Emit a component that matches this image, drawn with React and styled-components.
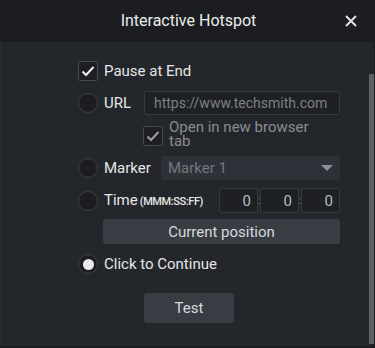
import React from 'react';
import styled, { createGlobalStyle } from 'styled-components';

const Global = createGlobalStyle`
  html, body { margin: 0; padding: 0; background: #23262b; }
  body { font-family: Roboto, "Liberation Sans", sans-serif; }
`;

const Dialog = styled.div`
  width: 375px;
  height: 348px;
  box-sizing: border-box;
  background: #23262b;
  border-right: 1px solid #1a1c1f;
  border-bottom: 2px solid #1a1c1f;
  display: flex;
  flex-direction: column;
  overflow: hidden;
`;

const Header = styled.div`
  height: 42px;
  flex: none;
  background: #1b1d20;
  display: flex;
  align-items: center;
  justify-content: center;
  position: relative;
  color: #ececec;
  font-size: 16px;
  padding: 0 0 2px 3px;
  box-sizing: border-box;
`;

const Close = styled.button`
  position: absolute;
  right: 17px;
  top: 15px;
  width: 12px;
  height: 12px;
  padding: 0;
  border: 0;
  background: none;
  display: flex;
`;

const Body = styled.div`
  flex: 1;
  display: flex;
  border-left: 1px solid #2a2d33;
`;

const Content = styled.div`
  flex: 1;
  padding: 19px 0 0 77px;
  display: flex;
  flex-direction: column;
`;

const Track = styled.div`
  width: 5px;
  padding-top: 32px;
  display: flex;
`;

const Thumb = styled.div`
  width: 5px;
  height: 270px;
  background: #5c5f64;
`;

const Row = styled.div`
  display: flex;
  align-items: ${(p) => p.$align || 'center'};
  width: 262px;
  margin-top: ${(p) => p.$top || 0}px;
  padding-left: ${(p) => p.$indent || 0}px;
  box-sizing: border-box;
`;

const Label = styled.span`
  color: #e6e6e6;
  font-size: 15px;
  margin-left: 6px;
  line-height: 20px;
  white-space: nowrap;
`;

const Note = styled.span`
  color: #8b8d91;
  font-size: 15px;
  margin: -6px 0 -2px 6px;
  line-height: 14px;
  width: 150px;
`;

const Small = styled.span`
  font-size: 11px;
  font-weight: 500;
  letter-spacing: -0.4px;
  margin-left: 2px;
`;

const Box = styled.span`
  flex: none;
  width: 18px;
  height: 18px;
  border: 1px solid #46494e;
  border-radius: 2px;
  background: #1d1f23;
  display: flex;
  align-items: center;
  justify-content: center;
`;

const Radio = styled.span`
  flex: none;
  width: 18px;
  height: 18px;
  border: 1px solid #3c3f45;
  border-radius: 50%;
  background: #1b1d21;
  display: flex;
  align-items: center;
  justify-content: center;
  &::after {
    content: '';
    display: ${(p) => (p.$on ? 'block' : 'none')};
    width: 11px;
    height: 11px;
    border-radius: 50%;
    background: #e8e9ef;
  }
`;

const Field = styled.div`
  margin-left: auto;
  width: ${(p) => p.$w}px;
  height: 24px;
  box-sizing: border-box;
  border: 1px solid #36393e;
  border-radius: 2px;
  background: #1e2024;
  color: #7d8085;
  font-size: 14px;
  padding-left: 9px;
  display: flex;
  align-items: center;
`;

const Select = styled.div`
  margin-left: auto;
  width: 179px;
  height: 24px;
  box-sizing: border-box;
  border-radius: 2px;
  background: #2e3137;
  color: #74777c;
  font-size: 15px;
  padding: 0 7px;
  display: flex;
  align-items: center;
  justify-content: space-between;
`;

const Arrow = styled.span`
  width: 0;
  height: 0;
  border-left: 6px solid transparent;
  border-right: 6px solid transparent;
  border-top: 6px solid #8d9095;
`;

const TimeGroup = styled.div`
  margin-left: auto;
  display: flex;
  align-items: center;
`;

const TimeBox = styled.div`
  width: 39px;
  height: 25px;
  box-sizing: border-box;
  border: 1px solid #36393e;
  border-radius: 2px;
  background: #1e2024;
  color: #b8bcc4;
  font-size: 15px;
  padding-right: 6px;
  display: flex;
  align-items: center;
  justify-content: flex-end;
`;

const Colon = styled.span`
  width: 2px;
  color: #6f86b0;
  font-size: 10px;
  line-height: 10px;
  text-align: center;
`;

const Button = styled.button`
  height: ${(p) => p.$h}px;
  width: ${(p) => p.$w}px;
  margin-left: ${(p) => p.$left}px;
  margin-top: ${(p) => p.$top}px;
  border: 0;
  border-radius: 3px;
  background: #383d43;
  color: #d8d9db;
  font-family: inherit;
  font-size: 15px;
  padding: 0;
`;

const Check = ({ dim }) => (
  <svg width="14" height="12" viewBox="0 0 14 12">
    <path d="M1.5 6.5 L5 10 L12.5 2" fill="none" stroke={dim ? '#9a9ca0' : '#f2f2f2'} strokeWidth="2" />
  </svg>
);

export default function App() {
  return (
    <>
      <Global />
      <Dialog>
        <Header>
          Interactive Hotspot
          <Close>
            <svg width="12" height="12" viewBox="0 0 12 12">
              <path d="M1 1 L11 11 M11 1 L1 11" stroke="#e2e2e2" strokeWidth="2" />
            </svg>
          </Close>
        </Header>
        <Body>
          <Content>
            <Row>
              <Box><Check /></Box>
              <Label>Pause at End</Label>
            </Row>
            <Row $top={10}>
              <Radio />
              <Label>URL</Label>
              <Field $w={196}>https://www.techsmith.com</Field>
            </Row>
            <Row $top={11} $indent={65} $align="flex-start">
              <Box><Check dim /></Box>
              <Note>Open in new browser tab</Note>
            </Row>
            <Row $top={10}>
              <Radio />
              <Label>Marker</Label>
              <Select>
                Marker 1
                <Arrow />
              </Select>
            </Row>
            <Row $top={8}>
              <Radio />
              <Label>Time<Small>(MMM:SS:FF)</Small></Label>
              <TimeGroup>
                <TimeBox>0</TimeBox>
                <Colon>:</Colon>
                <TimeBox>0</TimeBox>
                <Colon>:</Colon>
                <TimeBox>0</TimeBox>
              </TimeGroup>
            </Row>
            <Button $w={237} $h={25} $left={25} $top={6}>Current position</Button>
            <Row $top={10}>
              <Radio $on />
              <Label>Click to Continue</Label>
            </Row>
            <Button $w={90} $h={30} $left={66} $top={19}>Test</Button>
          </Content>
          <Track>
            <Thumb />
          </Track>
        </Body>
      </Dialog>
    </>
  );
}
